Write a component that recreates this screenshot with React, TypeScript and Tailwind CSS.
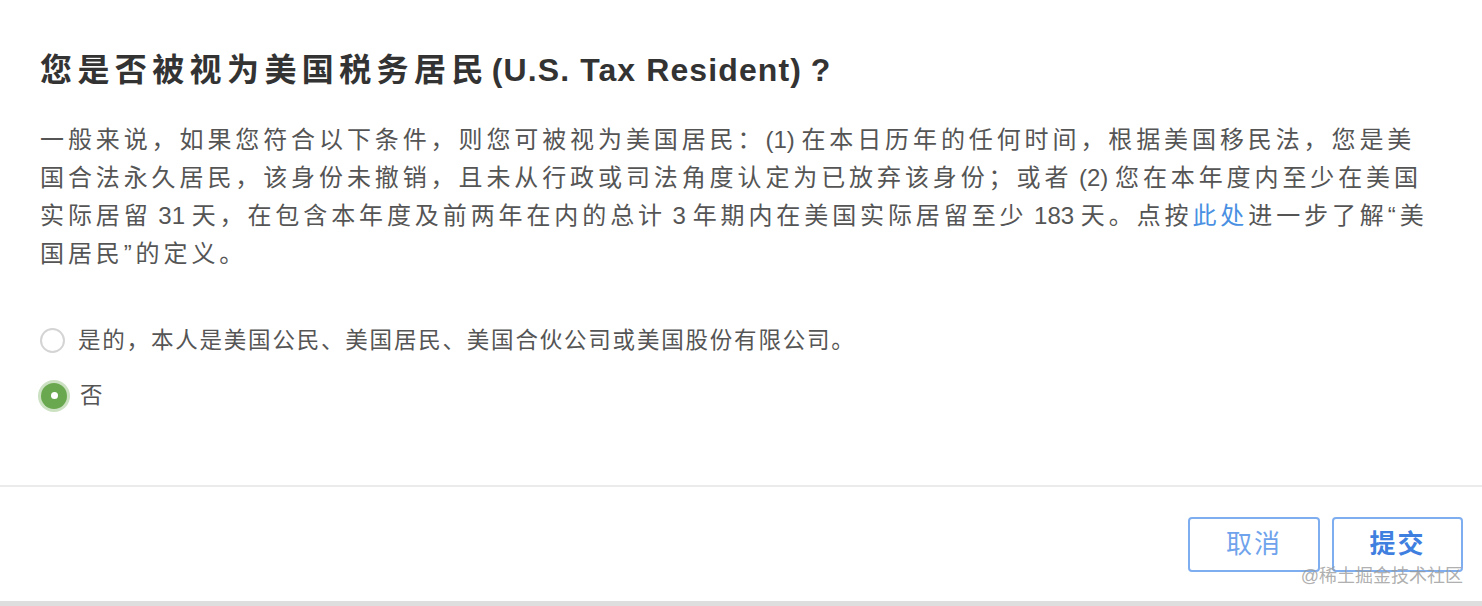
import { useState } from "react";

const font = { fontFamily: '"Liberation Sans", "Noto Sans CJK SC", sans-serif' };

function Latin({ children }: { children: string }) {
  return <span className="tracking-normal">{children}</span>;
}

function Radio({ checked, label, onSelect }: { checked: boolean; label: string; onSelect: () => void }) {
  return (
    <label className="flex cursor-pointer items-center gap-[13px]" onClick={onSelect}>
      {checked ? (
        <span className="ml-[1px] flex h-[26px] w-[26px] items-center justify-center rounded-full bg-[#6aa84f] shadow-[0_0_0_3px_rgba(106,168,79,0.35)]">
          <span className="h-[7px] w-[7px] rounded-full bg-white" />
        </span>
      ) : (
        <span className="h-[25px] w-[25px] rounded-full border-2 border-[#d4d4d4] bg-white" />
      )}
      <span className="text-[22.5px] leading-[33px] tracking-[1.8px] text-[#555]">{label}</span>
    </label>
  );
}

export default function App() {
  const [resident, setResident] = useState(false);

  return (
    <div className="relative h-[606px] w-[1482px] overflow-hidden bg-white" style={font}>
      <div className="flex h-[487px] flex-col border-b-2 border-[#ebebeb] px-[40px]">
        <h1 className="mt-[49px] whitespace-nowrap text-[32px] font-bold leading-[42px] tracking-[5.4px] text-[#333]">
          您是否被视为美国税务居民<span className="ml-[3px] tracking-[1.1px]">(U.S. Tax Resident)</span>
          <span className="tracking-normal"> ?</span>
        </h1>
        <p className="mt-[30px] whitespace-nowrap text-[24px] leading-[38px] tracking-[3.9px] text-[#555]">
          一般来说，如果您符合以下条件，则您可被视为美国居民：<Latin>(1) </Latin>在本日历年的任何时间，根据美国移民法，您是美
          <br />
          国合法永久居民，该身份未撤销，且未从行政或司法角度认定为已放弃该身份；或者<Latin> (2) </Latin>您在本年度内至少在美国
          <br />
          实际居留<Latin> 31 </Latin>天，在包含本年度及前两年在内的总计<Latin> 3 </Latin>年期内在美国实际居留至少<Latin> 183 </Latin>天。点按
          <a className="text-[#4a90e2]" href="#">
            此处
          </a>
          进一步了解“美
          <br />
          国居民”的定义。
        </p>
        <div className="mt-[51px] flex flex-col gap-[22px]">
          <Radio checked={resident} label="是的，本人是美国公民、美国居民、美国合伙公司或美国股份有限公司。" onSelect={() => setResident(true)} />
          <Radio checked={!resident} label="否" onSelect={() => setResident(false)} />
        </div>
      </div>
      <div className="flex h-[114px] items-start justify-end gap-[12px] pr-[19px] pt-[30px]">
        <button className="h-[55px] w-[132px] rounded-[4px] border-2 border-[#7eaef0] text-[26px] tracking-[2px] text-[#6fa3ec]" type="button">
          取消
        </button>
        <button className="h-[55px] w-[131px] rounded-[4px] border-2 border-[#7eaef0] text-[26px] font-bold tracking-[2px] text-[#3f7fdf]" type="button">
          提交
        </button>
      </div>
      <div className="absolute bottom-0 left-0 h-[5px] w-full bg-[#dedede]" />
      <span className="pointer-events-none absolute bottom-[16px] right-[19px] text-[18px] text-[#9a9a9a]/80">@稀土掘金技术社区</span>
    </div>
  );
}
